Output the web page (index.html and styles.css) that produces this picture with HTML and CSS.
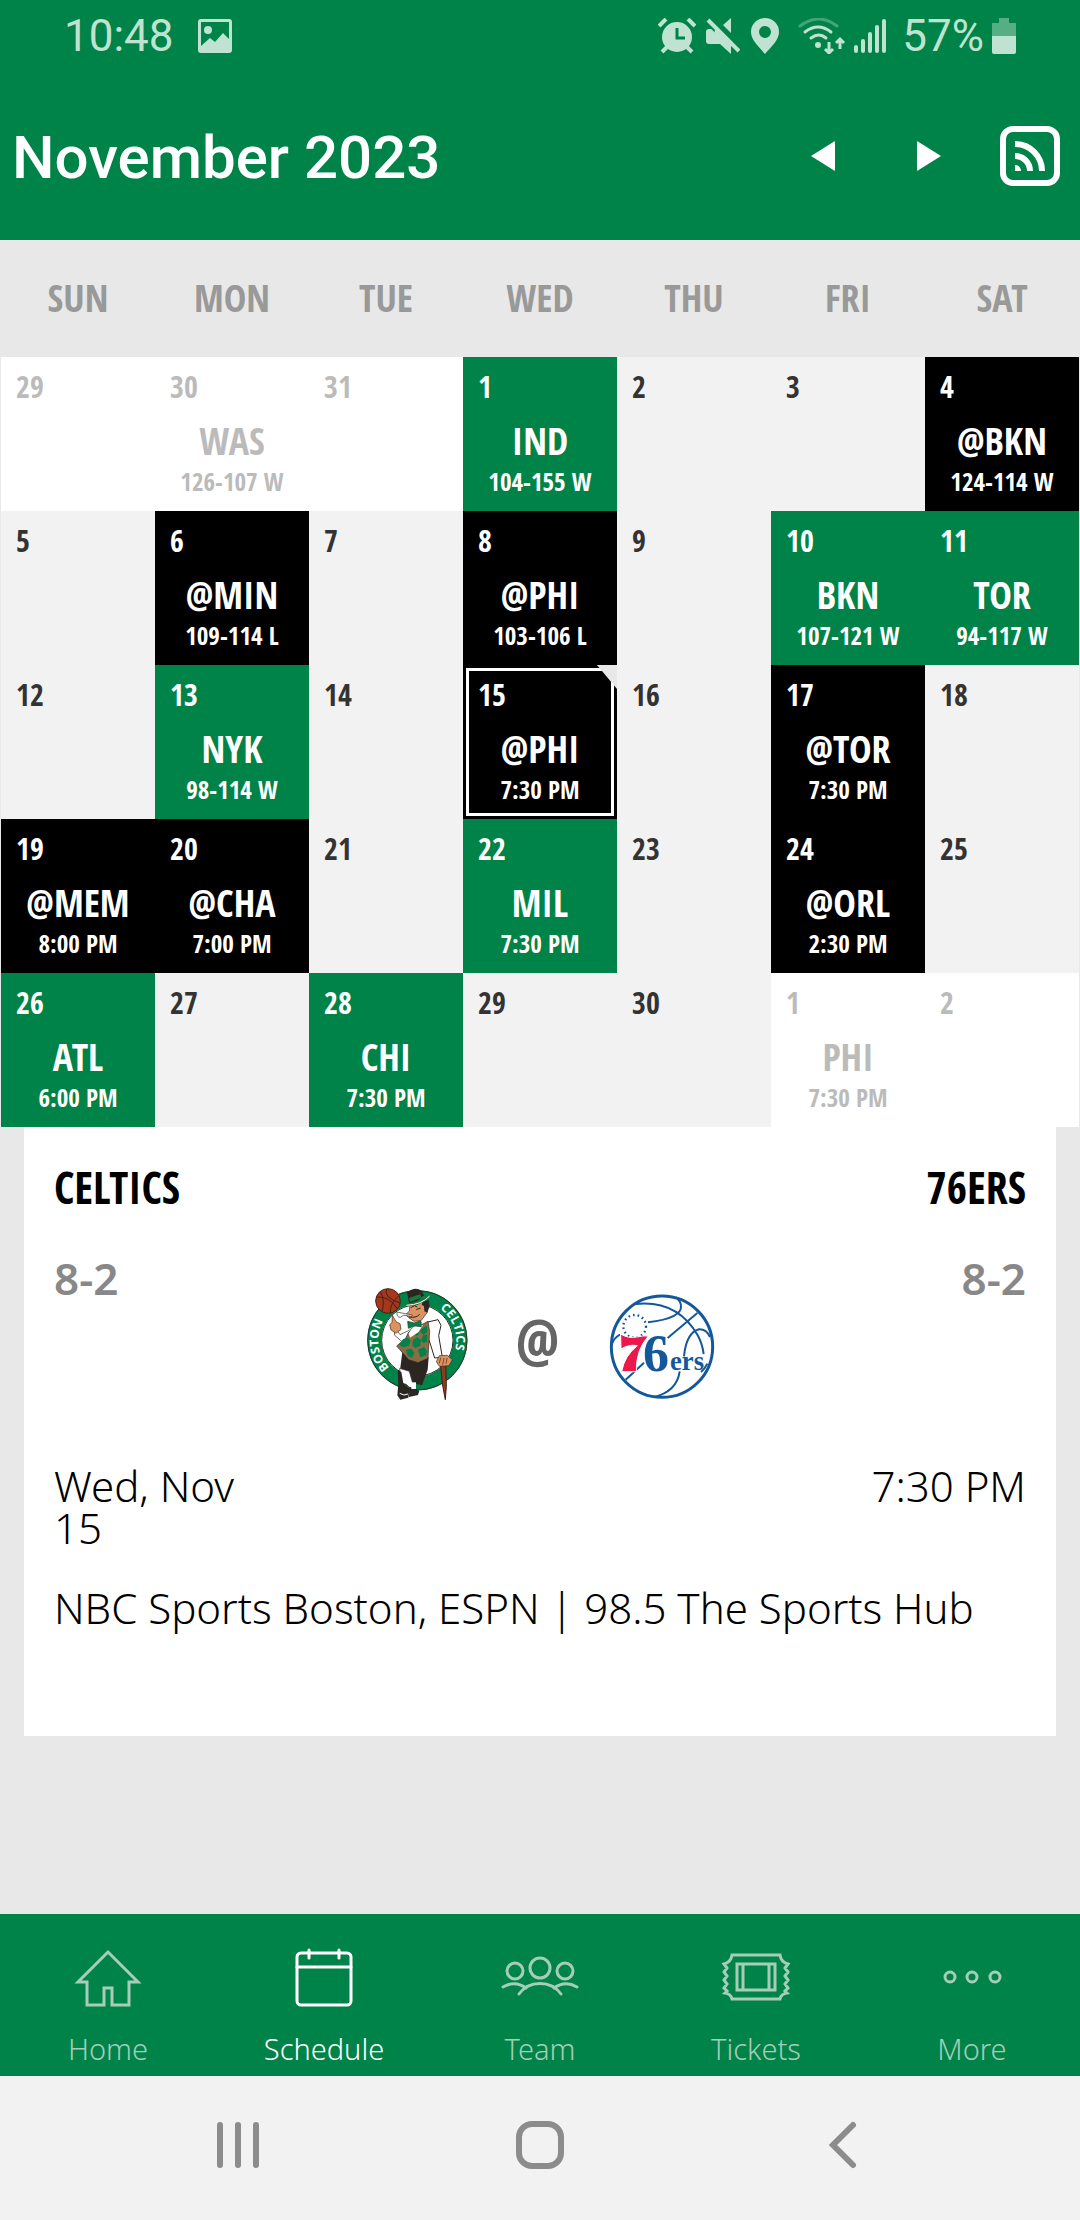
FILE: index.html
```html
<!DOCTYPE html>
<html lang="en">
<head>
    <meta charset="UTF-8">
    <meta name="viewport" content="width=device-width, initial-scale=1.0">
    <title>Schedule - November 2023</title>
    <link rel="stylesheet" href="styles.css">
</head>
<body>
    <div class="status-bar">
        <span class="clock">10:48</span>
        <svg class="picture" width="34" height="34" viewBox="0 0 34 34">
            <path fill="currentColor" fill-rule="evenodd" d="M3 0h28a3 3 0 0 1 3 3v28a3 3 0 0 1-3 3H3a3 3 0 0 1-3-3V3a3 3 0 0 1 3-3zM3 3v24l9-8 5 4 8-9 6 6V3z"/>
            <circle cx="10" cy="11" r="4" fill="currentColor"/>
        </svg>
        <div class="status-icons">
            <svg width="38" height="36" viewBox="0 0 38 36" fill="none" stroke="currentColor" stroke-width="4">
                <circle cx="19" cy="19" r="15" fill="currentColor" stroke="none"/>
                <path d="M1 8l7-7M37 8l-7-7M9 29l-5 5M29 29l5 5"/>
                <path d="M19 10v10h8" stroke="#008348" stroke-width="3"/>
            </svg>
            <svg class="mute" width="34" height="36" viewBox="0 0 34 36" fill="currentColor">
                <path d="M25 0v15l-8-8zM3 11h5l17 17v8l-11-10H3a3 3 0 0 1-3-3v-9a3 3 0 0 1 3-3z"/>
                <path d="M2 2l31 31" stroke="#008348" stroke-width="8"/>
                <path d="M2 2l31 31" stroke="currentColor" stroke-width="4"/>
                <path d="M9 11l16 15v9L8 18z"/>
            </svg>
            <svg class="pin" width="28" height="36" viewBox="0 0 28 36">
                <path fill="currentColor" fill-rule="evenodd" d="M14 0a14 14 0 0 1 14 14c0 8-8 15-14 22C8 29 0 22 0 14A14 14 0 0 1 14 0zm0 8a6 6 0 1 0 0 12 6 6 0 0 0 0-12z"/>
            </svg>
            <svg class="wifi" width="48" height="36" viewBox="0 0 48 36" fill="none" stroke="currentColor" stroke-width="3" stroke-linecap="round">
                <path d="M2 8q19-14 37 0" opacity=".35"/>
                <path d="M7 14q13-10 26 0M13 20q8-6 15 0"/>
                <circle cx="20" cy="27" r="3" fill="currentColor" stroke="none"/>
                <path d="M31 24v10M27 31l4 4 4-4M42 31V21M38 25l4-4 4 4" stroke-linecap="butt"/>
            </svg>
            <svg class="signal" width="32" height="34" viewBox="0 0 32 34" stroke="currentColor" stroke-width="4" stroke-linecap="round">
                <path d="M2 28v4M9 22v10M16 15v17M23 8v24M30 2v30"/>
            </svg>
            <span class="percent">57%</span>
            <svg width="24" height="36" viewBox="0 0 24 36" fill="currentColor">
                <path d="M7 0h10v5h7v13H0V5h7z" opacity=".45"/>
                <path d="M0 18h24v16a2 2 0 0 1-2 2H2a2 2 0 0 1-2-2z"/>
            </svg>
        </div>
    </div>

    <header class="header">
        <h1>November 2023</h1>
        <button class="arrow" type="button" aria-label="Previous month">
            <svg width="24" height="30" viewBox="0 0 24 30"><path d="M0 15L24 0v30z" fill="#fff"/></svg>
        </button>
        <button class="arrow" type="button" aria-label="Next month">
            <svg width="24" height="30" viewBox="0 0 24 30"><path d="M24 15L0 0v30z" fill="#fff"/></svg>
        </button>
        <button class="feed" type="button" aria-label="Subscribe">
            <svg width="60" height="60" viewBox="0 0 60 60" fill="none" stroke="#fff" stroke-width="6">
                <rect x="3" y="3" width="54" height="54" rx="10"/>
                <path d="M15 18a27 27 0 0 1 27 27M15 30a15 15 0 0 1 15 15"/>
                <path d="M15 39a6 6 0 0 1 6 6h-6z" fill="#fff" stroke="none"/>
            </svg>
        </button>
    </header>

    <main class="content">
        <table class="calendar">
            <thead>
                <tr>
                    <th scope="col">SUN</th>
                    <th scope="col">MON</th>
                    <th scope="col">TUE</th>
                    <th scope="col">WED</th>
                    <th scope="col">THU</th>
                    <th scope="col">FRI</th>
                    <th scope="col">SAT</th>
                </tr>
            </thead>
            <tbody>
                <tr>
                    <td class="other"><span class="day">29</span></td>
                    <td class="other"><span class="day">30</span><span class="team">WAS</span><span class="info">126-107 W</span></td>
                    <td class="other"><span class="day">31</span></td>
                    <td class="home"><span class="day">1</span><span class="team">IND</span><span class="info">104-155 W</span></td>
                    <td><span class="day">2</span></td>
                    <td><span class="day">3</span></td>
                    <td class="away"><span class="day">4</span><span class="team">@BKN</span><span class="info">124-114 W</span></td>
                </tr>
                <tr>
                    <td><span class="day">5</span></td>
                    <td class="away"><span class="day">6</span><span class="team">@MIN</span><span class="info">109-114 L</span></td>
                    <td><span class="day">7</span></td>
                    <td class="away"><span class="day">8</span><span class="team">@PHI</span><span class="info">103-106 L</span></td>
                    <td><span class="day">9</span></td>
                    <td class="home"><span class="day">10</span><span class="team">BKN</span><span class="info">107-121 W</span></td>
                    <td class="home"><span class="day">11</span><span class="team">TOR</span><span class="info">94-117 W</span></td>
                </tr>
                <tr>
                    <td><span class="day">12</span></td>
                    <td class="home"><span class="day">13</span><span class="team">NYK</span><span class="info">98-114 W</span></td>
                    <td><span class="day">14</span></td>
                    <td class="away selected"><span class="day">15</span><span class="team">@PHI</span><span class="info">7:30 PM</span></td>
                    <td><span class="day">16</span></td>
                    <td class="away"><span class="day">17</span><span class="team">@TOR</span><span class="info">7:30 PM</span></td>
                    <td><span class="day">18</span></td>
                </tr>
                <tr>
                    <td class="away"><span class="day">19</span><span class="team">@MEM</span><span class="info">8:00 PM</span></td>
                    <td class="away"><span class="day">20</span><span class="team">@CHA</span><span class="info">7:00 PM</span></td>
                    <td><span class="day">21</span></td>
                    <td class="home"><span class="day">22</span><span class="team">MIL</span><span class="info">7:30 PM</span></td>
                    <td><span class="day">23</span></td>
                    <td class="away"><span class="day">24</span><span class="team">@ORL</span><span class="info">2:30 PM</span></td>
                    <td><span class="day">25</span></td>
                </tr>
                <tr>
                    <td class="home"><span class="day">26</span><span class="team">ATL</span><span class="info">6:00 PM</span></td>
                    <td><span class="day">27</span></td>
                    <td class="home"><span class="day">28</span><span class="team">CHI</span><span class="info">7:30 PM</span></td>
                    <td><span class="day">29</span></td>
                    <td><span class="day">30</span></td>
                    <td class="other"><span class="day">1</span><span class="team">PHI</span><span class="info">7:30 PM</span></td>
                    <td class="other"><span class="day">2</span></td>
                </tr>
            </tbody>
        </table>

        <section class="game">
            <div class="matchup">
                <div class="side">
                    <h2>CELTICS</h2>
                    <p class="record">8-2</p>
                </div>
                <div class="logos">
                    <!-- Celtics -->
                    <svg width="115" height="125" viewBox="0 0 345 375">
                        <circle cx="172" cy="181" r="129" fill="#fff" stroke="#008348" stroke-width="42"/>
                        <circle cx="172" cy="181" r="149" fill="none" stroke="#26352b" stroke-width="3"/>
                        <circle cx="172" cy="181" r="107" fill="none" stroke="#26352b" stroke-width="3"/>
                        <path id="ring-left" d="M88 263A117 117 0 0 1 96 92" fill="none"/>
                        <path id="ring-right" d="M240 86A117 117 0 0 1 250 268" fill="none"/>
                        <text class="ring-text"><textPath href="#ring-left">BOSTON</textPath></text>
                        <text class="ring-text"><textPath href="#ring-right">CELTICS</textPath></text>
                        <!-- ball -->
                        <circle cx="84" cy="63" r="37" fill="#a3381d" stroke="#4a2015" stroke-width="3"/>
                        <path d="M50 51q40-3 63 37M61 34q15 28 5 61M80 27q-12 23 41 43M91 99q-2-28 25-51" fill="none" stroke="#4a2015" stroke-width="3"/>
                        <!-- cane -->
                        <path d="M240 236l17 7 2 75-3 41-9-48z" fill="#8c3c20" stroke="#3a2018" stroke-width="3"/>
                        <!-- legs and shoes -->
                        <path d="M127 216l79 16-3 37-17 47-28-6-10-30-28-9z" fill="#2c2623"/>
                        <path d="M119 265l29 9 10 36 11 8-14 11-16-16-16-4z" fill="#fff" stroke="#2c2623" stroke-width="2"/>
                        <path d="M113 270l11 6 6 34 19 16-4 27-24 6-9-13 3-34zM148 320l18 5 12 8-4 12-27 6z" fill="#2c2623"/>
                        <path d="M154 307h14v20h-14z" fill="#fff"/>
                        <path d="M119 340q14 9 25 2" fill="none" stroke="#fff" stroke-width="3"/>
                        <!-- arms -->
                        <path d="M106 143l14 21 25-12 39-25-14 30-44 28-23-20z" fill="#fff" stroke="#2c2623" stroke-width="2"/>
                        <path d="M203 126l31-7 9 17-7 31 11 65-23 2-14-45-9-24z" fill="#fff" stroke="#2c2623" stroke-width="3"/>
                        <path d="M97 106l11 19 12 6 3 17-15 12-15-10-4-16 7-6zM238 227l24-1 15 13-10 18-29 2-9-14z" fill="#dd9264" stroke="#3b2418" stroke-width="2"/>
                        <path d="M238 250l4-17M248 254l4-20M258 251l3-17" stroke="#3b2418" stroke-width="2"/>
                        <!-- vest -->
                        <path d="M146 156l20-12 38-20 5 31-5 80-30 13-28-9-36-41 27-23z" fill="#8c6c45" stroke="#2c2623" stroke-width="2"/>
                        <path d="M129 178l13-5 10 8-5 16-18 5-12-8zM159 181l12-9 12 7-2 18-15 7-9-8zM189 166l13-3v22l-12 4-7-8zM138 209l16-3 9 12-7 15-13-5zM174 209l18-8 9 11-3 14-17 6zM185 146l15-9 3 19-13 8-10-9zM159 157l12-7 7 11-9 8z" fill="#008348"/>
                        <path d="M146 160l18-23 25-2-14 22-25 16z" fill="#fff"/>
                        <path d="M143 124l19 5 20-7 2 18-19-2-20 7z" fill="#008348" stroke="#26352b" stroke-width="2"/>
                        <!-- head -->
                        <path d="M150 70l41-7 12 17-2 18-17 23-22 3-16-11-9-9 11-11z" fill="#dd9264" stroke="#3b2418" stroke-width="2"/>
                        <path d="M188 65l18-5 3 18-7 20-9-4-1-16-7-3z" fill="#2c2623"/>
                        <path d="M152 83l11-6 9 4M169 89l13-5M147 111q20 4 32-8M162 76l13-4" fill="none" stroke="#2c2623" stroke-width="3"/>
                        <path d="M111 96l24 5 22 4-2 4-25-3-9 6q-12-1-10-16z" fill="#fff" stroke="#2c2623" stroke-width="2"/>
                        <path d="M146 63l-5-26q25-19 44-4l7 13-8 17-33 12z" fill="#2c2623"/>
                        <path d="M139 70q35-1 50-22l14-2q10-5 6 5-24 27-67 28-11-2-3-9zM147 54l33-11 5 10-35 13z" fill="#167a3f"/>
                        <path d="M139 76q46-2 70-28" fill="none" stroke="#fff" stroke-width="3"/>
                    </svg>
                    <span class="at">@</span>
                    <!-- 76ers -->
                    <svg width="120" height="120" viewBox="0 0 360 360">
                        <g fill="none" stroke="#14589b" stroke-width="6">
                            <circle cx="186" cy="191" r="152" stroke-width="9" fill="#fff"/>
                            <path d="M107 63q125-13 187 95 13 24 17 55M144 118q103-12 99-50-1-13-15-25M292 90L203 165M252 220q7-71 45-81 22-1 33 23M34 189q7-25 26-34M77 290l55-51M239 265q-8 61-80 78M322 242q-7 15-19 25"/>
                            <circle cx="104" cy="130" r="34" stroke-width="7" stroke-dasharray="5 9"/>
                        </g>
                        <path d="M62 153q22 14 48 9 21-5 35-3-38 43-36 107H65q8-47 47-78-25-5-49 10z" fill="#ed174c" stroke="#fff" stroke-width="3"/>
                        <text class="sixers-six" x="129" y="263">6</text>
                        <text class="sixers-ers" x="210" y="262">ers</text>
                    </svg>
                </div>
                <div class="side right">
                    <h2>76ERS</h2>
                    <p class="record">8-2</p>
                </div>
            </div>
            <div class="when">
                <p class="date">Wed, Nov 15</p>
                <p>7:30 PM</p>
            </div>
            <p class="broadcast">NBC Sports Boston, ESPN | 98.5 The Sports Hub</p>
        </section>
    </main>

    <nav class="tab-bar">
        <a href="#home">
            <svg width="80" height="80" viewBox="0 0 80 80">
                <path d="M40 13L10 43h9v23h17V49h8v17h17V43h9z"/>
            </svg>
            Home
        </a>
        <a href="#schedule" class="active">
            <svg width="80" height="80" viewBox="0 0 80 80">
                <rect x="13" y="14" width="54" height="52" rx="4"/>
                <path d="M13 28h54M25 11v8M55 11v8"/>
            </svg>
            Schedule
        </a>
        <a href="#team">
            <svg width="80" height="80" viewBox="0 0 80 80">
                <circle cx="40" cy="29" r="10"/>
                <circle cx="15" cy="32" r="8"/>
                <circle cx="65" cy="32" r="8"/>
                <path d="M19 55c10-14 32-14 42 0M3 48q12-7 23 1M77 48q-12-7-23 1"/>
            </svg>
            Team
        </a>
        <a href="#tickets">
            <svg width="80" height="80" viewBox="0 0 80 80">
                <path d="M16 16h48q1 7 8 9l-3 4 3 4-3 4 3 4-3 4 3 4-3 3 2 2q-6 1-7 6H16q-1-5-7-6l2-2-3-3 3-4-3-4 3-4-3-4 3-4-3-4q7-2 8-9z"/>
                <path d="M21 25h38v26H21zM27 25v26M53 25v26"/>
            </svg>
            Tickets
        </a>
        <a href="#more">
            <svg width="80" height="80" viewBox="0 0 80 80">
                <circle cx="18" cy="38" r="5"/>
                <circle cx="40" cy="38" r="5"/>
                <circle cx="63" cy="38" r="5"/>
            </svg>
            More
        </a>
    </nav>

    <div class="system-bar">
        <button type="button" aria-label="Recent apps">
            <svg width="48" height="50" viewBox="0 0 48 50"><path d="M6 5v40M24 5v40M42 5v40"/></svg>
        </button>
        <button type="button" aria-label="Home screen">
            <svg width="48" height="50" viewBox="0 0 48 50"><rect x="3" y="4" width="42" height="42" rx="13"/></svg>
        </button>
        <button type="button" aria-label="Back">
            <svg width="48" height="50" viewBox="0 0 48 50"><path d="M35 5L15 25l20 20"/></svg>
        </button>
    </div>
</body>
</html>
```
FILE: styles.css
```css
* {
    box-sizing: border-box;
}

body {
    display: flex;
    flex-direction: column;
    min-height: 100vh;
    margin: 0;
    background-color: #e8e8e8;
    color: #000;
    font-family: "Noto Sans", sans-serif;
}

h1, h2, p {
    margin: 0;
    font-weight: 300;
}

button {
    padding: 0;
    border: 0;
    background: none;
}

svg {
    display: block;
    flex: none;
}

/* Phone status bar */
.status-bar {
    display: flex;
    align-items: center;
    height: 72px;
    padding: 0 64px;
    background-color: #008348;
    color: #bfe3d0;
    font-family: Roboto, sans-serif;
    font-size: 44px;
}

.picture {
    margin-left: 24px;
}

.status-icons {
    display: flex;
    align-items: center;
    margin-left: auto;
}

.mute {
    margin-left: 10px;
}

.pin {
    margin-left: 11px;
}

.wifi {
    margin-left: 19px;
}

.signal {
    margin-left: 8px;
}

.percent {
    margin: 0 8px 0 16px;
}

/* Month header */
.header {
    display: flex;
    align-items: center;
    height: 168px;
    padding: 2px 20px 0 12px;
    background-color: #008348;
    color: #fff;
}

.header h1 {
    flex: 1;
    font-family: Roboto, sans-serif;
    font-size: 60px;
    font-weight: 500;
}

.header svg {
    margin: 0 auto;
}

.header button {
    height: 100px;
    margin-bottom: 2px;
}

.arrow {
    width: 106px;
}

.feed {
    width: 60px;
    margin-left: 18px;
}

.content {
    flex: 1;
}

/* Calendar */
.calendar {
    width: 100%;
    padding: 0 1px;
    border-spacing: 0;
    table-layout: fixed;
    font-family: "Open Sans Condensed", "Roboto Condensed", sans-serif;
    font-weight: 700;
}

.calendar th {
    height: 117px;
    padding: 0 0 4px;
    color: #999;
    font-size: 38px;
}

.calendar td {
    position: relative;
    height: 154px;
    padding: 12px 0 0;
    background-color: #f2f2f2;
    color: #333;
    text-align: center;
    vertical-align: top;
}

.calendar td.home {
    background-color: #008348;
    color: #fff;
}

.calendar td.away {
    background-color: #000;
    color: #fff;
}

.calendar td.other {
    background-color: #fff;
    color: #bbb;
}

.calendar span {
    display: block;
}

.day {
    padding-left: 15px;
    font-size: 30px;
    line-height: 36px;
    text-align: left;
}

.team {
    margin-top: 14px;
    font-size: 38px;
    line-height: 42px;
}

.info {
    font-size: 25px;
    line-height: 40px;
}

.selected::before {
    content: "";
    position: absolute;
    inset: 3px;
    border: 3px solid #fff;
}

.selected::after {
    content: "";
    position: absolute;
    top: 0;
    right: 0;
    width: 20px;
    height: 24px;
    background-color: #e8e8e8;
    clip-path: polygon(0 0, 100% 0, 100% 100%);
}

/* Game card */
.game {
    margin: 0 24px;
    padding: 30px 30px 107px;
    background-color: #fff;
    font-size: 42px;
    line-height: 42px;
}

.matchup {
    display: grid;
    grid-template-columns: 1fr auto 1fr;
}

.matchup h2 {
    font-family: "Open Sans Condensed", "Roboto Condensed", sans-serif;
    font-size: 44px;
    font-weight: 700;
    line-height: 60px;
}

.right {
    text-align: right;
}

.record {
    margin-top: 37px;
    color: #888;
    font-size: 44px;
    font-weight: 600;
    line-height: 48px;
}

.logos {
    display: flex;
    align-items: center;
    padding-top: 123px;
}

.at {
    width: 125px;
    padding-bottom: 6px;
    color: #666;
    font-family: "Open Sans Condensed", "Roboto Condensed", sans-serif;
    font-size: 60px;
    font-weight: 700;
    text-align: center;
}

.ring-text {
    fill: #fff;
    font-family: "Open Sans", sans-serif;
    font-size: 36px;
    font-weight: 700;
}

.sixers-six, .sixers-ers {
    fill: #14589b;
    font-family: "Liberation Serif", serif;
    font-weight: 700;
}

.sixers-six {
    font-size: 156px;
}

.sixers-ers {
    font-size: 80px;
}

.when {
    display: flex;
    justify-content: space-between;
    margin-top: 60px;
}

.date {
    width: 22%;
}

.broadcast {
    margin-top: 38px;
}

/* App tabs */
.tab-bar {
    display: grid;
    grid-template-columns: repeat(5, 1fr);
    height: 162px;
    padding-top: 25px;
    background-color: #008348;
}

.tab-bar a {
    display: flex;
    flex-direction: column;
    align-items: center;
    gap: 10px;
    color: #a5cdb8;
    font-size: 29px;
    font-weight: 300;
    line-height: 40px;
    text-decoration: none;
}

.tab-bar .active {
    color: #fff;
}

.tab-bar svg {
    fill: none;
    stroke: currentColor;
    stroke-width: 3;
    stroke-linecap: round;
}

/* Phone navigation keys */
.system-bar {
    display: flex;
    justify-content: center;
    gap: 254px;
    height: 144px;
    padding-bottom: 6px;
    background-color: #f2f2f2;
}

.system-bar svg {
    fill: none;
    stroke: #8c8c8c;
    stroke-width: 6;
    stroke-linecap: round;
}
```
